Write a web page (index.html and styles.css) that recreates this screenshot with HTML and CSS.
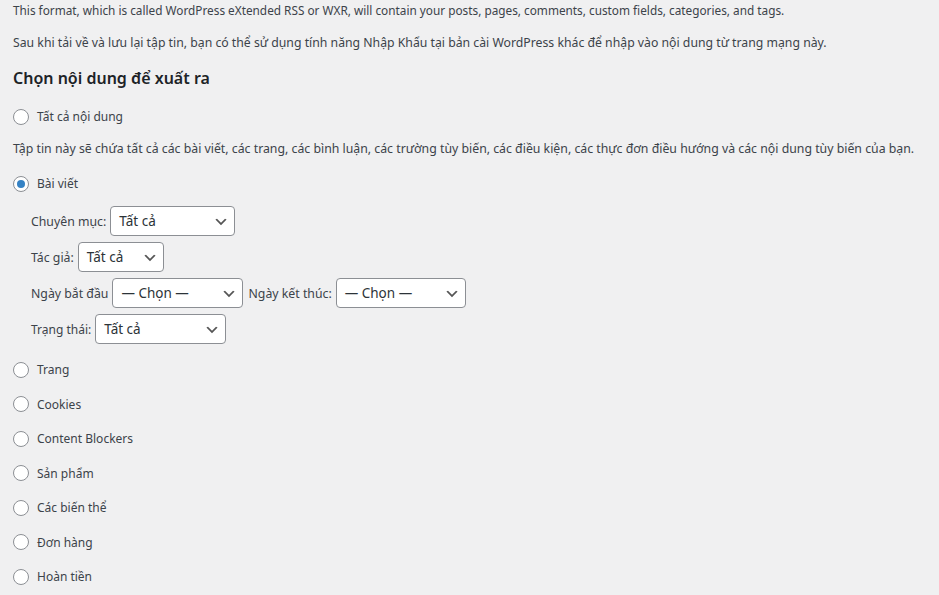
FILE: index.html
```html
<!DOCTYPE html>
<html lang="vi">
<head>
<meta charset="utf-8">
<title>Xuất dữ liệu</title>
<link rel="stylesheet" href="styles.css">
</head>
<body>
<div class="wrap">
  <p class="intro intro-en">This format, which is called WordPress eXtended RSS or WXR, will contain your posts, pages, comments, custom fields, categories, and tags.</p>
  <p class="intro intro-vi">Sau khi tải về và lưu lại tập tin, bạn có thể sử dụng tính năng Nhập Khẩu tại bản cài WordPress khác để nhập vào nội dung từ trang mạng này.</p>
  <h2 class="heading">Chọn nội dung để xuất ra</h2>

  <label class="radio-row r-all"><span class="radio"></span><span class="rtext">Tất cả nội dung</span></label>
  <p class="desc">Tập tin này sẽ chứa tất cả các bài viết, các trang, các bình luận, các trường tùy biến, các điều kiện, các thực đơn điều hướng và các nội dung tùy biến của bạn.</p>
  <label class="radio-row r-posts"><span class="radio checked"></span><span class="rtext">Bài viết</span></label>

  <div class="filters">
    <div class="filter-row">
      <span class="flabel">Chuyên mục:</span>
      <div class="select w-cat"><span>Tất cả</span><svg class="chev" viewBox="0 0 20 20"><path d="M5 6l5 5 5-5 2 1-7 7-7-7 2-1z"/></svg></div>
    </div>
    <div class="filter-row">
      <span class="flabel">Tác giả:</span>
      <div class="select w-author"><span>Tất cả</span><svg class="chev" viewBox="0 0 20 20"><path d="M5 6l5 5 5-5 2 1-7 7-7-7 2-1z"/></svg></div>
    </div>
    <div class="filter-row">
      <span class="flabel">Ngày bắt đầu</span>
      <div class="select w-date"><span>— Chọn —</span><svg class="chev" viewBox="0 0 20 20"><path d="M5 6l5 5 5-5 2 1-7 7-7-7 2-1z"/></svg></div>
      <span class="flabel">Ngày kết thúc:</span>
      <div class="select w-date2"><span>— Chọn —</span><svg class="chev" viewBox="0 0 20 20"><path d="M5 6l5 5 5-5 2 1-7 7-7-7 2-1z"/></svg></div>
    </div>
    <div class="filter-row">
      <span class="flabel fl-status">Trạng thái:</span>
      <div class="select w-status"><span>Tất cả</span><svg class="chev" viewBox="0 0 20 20"><path d="M5 6l5 5 5-5 2 1-7 7-7-7 2-1z"/></svg></div>
    </div>
  </div>

  <div class="radio-list">
    <label class="radio-row"><span class="radio"></span><span class="rtext">Trang</span></label>
    <label class="radio-row"><span class="radio"></span><span class="rtext">Cookies</span></label>
    <label class="radio-row"><span class="radio"></span><span class="rtext">Content Blockers</span></label>
    <label class="radio-row"><span class="radio"></span><span class="rtext">Sản phẩm</span></label>
    <label class="radio-row"><span class="radio"></span><span class="rtext">Các biến thể</span></label>
    <label class="radio-row"><span class="radio"></span><span class="rtext">Đơn hàng</span></label>
    <label class="radio-row"><span class="radio"></span><span class="rtext">Hoàn tiền</span></label>
  </div>
</div>
</body>
</html>
```

FILE: styles.css
```css
html, body {
  margin: 0;
  padding: 0;
  background: #f0f0f1;
}
body {
  font-family: "Noto Sans", "Open Sans", sans-serif;
  font-size: 12px;
  color: #3c434a;
}
.wrap {
  padding: 0 13px;
  display: flex;
  flex-direction: column;
  align-items: flex-start;
}
.intro {
  margin: 0 0 13px;
  line-height: 20px;
  white-space: nowrap;
}
.intro-en { font-size: 11.8px; }
.intro-vi { font-size: 12.25px; }
.heading {
  margin: 0;
  font-size: 16px;
  font-weight: 600;
  line-height: 24px;
  height: 24px;
  color: #1d2327;
}
.radio-row {
  display: flex;
  align-items: center;
  gap: 8px;
  height: 20px;
  line-height: 20px;
}
.rtext {
  padding-top: 2px;
}
.r-all { margin-top: 16px; }
.desc {
  margin: 13px 0 0;
  line-height: 20px;
  font-size: 12.3px;
  white-space: nowrap;
}
.r-posts { margin-top: 14px; }
.radio {
  box-sizing: border-box;
  width: 16px;
  height: 16px;
  border: 1px solid #8c8f94;
  border-radius: 50%;
  background: #fff;
  display: flex;
  align-items: center;
  justify-content: center;
  flex: none;
  margin-top: 1px;
}
.radio.checked::before {
  content: "";
  width: 8px;
  height: 8px;
  border-radius: 50%;
  background: #3582c4;
}
.filters {
  margin: 13px 0 0 18px;
  display: flex;
  flex-direction: column;
  gap: 6px;
}
.filter-row {
  display: flex;
  align-items: center;
  height: 30px;
}
.flabel {
  margin-right: 4px;
  white-space: nowrap;
  font-size: 12.3px;
}
.fl-status {
  font-size: 12px;
}
.select + .flabel {
  margin-left: 5px;
}
.select {
  box-sizing: border-box;
  height: 30px;
  border: 1px solid #8c8f94;
  border-radius: 4px;
  background: #fff;
  display: flex;
  align-items: center;
  justify-content: space-between;
  padding: 0 5px 0 8px;
  color: #2c3338;
  font-size: 13.5px;
}
.chev {
  width: 16px;
  height: 16px;
  fill: #555;
  margin-top: 1px;
}
.w-cat { width: 125px; }
.w-author { width: 86px; }
.w-date { width: 131px; }
.w-date2 { width: 130px; }
.w-status { width: 131px; }
.radio-list {
  margin-top: 15px;
  display: flex;
  flex-direction: column;
  gap: 14.5px;
}
```
